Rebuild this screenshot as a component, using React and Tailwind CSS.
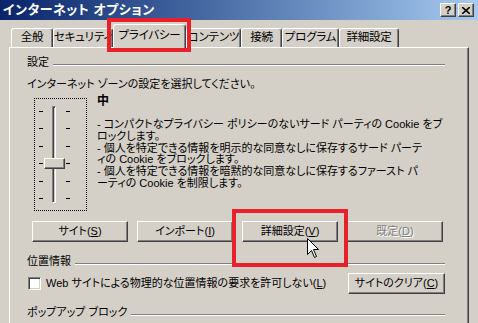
import React from 'react';

const raised =
  'border border-t-white border-l-white border-r-[#404040] border-b-[#404040] shadow-[inset_-1px_-1px_#808080] bg-[#d4d0c8]';

function Btn({ children, className = '', disabled }) {
  return (
    <div className={`h-[21px] flex items-center justify-center whitespace-nowrap ${raised} ${className}`}>
      <span className={disabled ? 'text-[#808080] [text-shadow:1px_1px_0_#fff]' : 'text-black'}>{children}</span>
    </div>
  );
}

function GroupLabel({ label, className = '' }) {
  return (
    <div className={`flex items-start h-[14px] ${className}`}>
      <span className="leading-[14px] pr-[4px] whitespace-nowrap">{label}</span>
      <div className="flex-1 mt-[9px] h-[2px] border-t border-t-[#808080] border-b border-b-white" />
    </div>
  );
}

function Tab({ label, width, selected }) {
  if (selected) {
    return (
      <div
        className={`relative z-10 -mb-[1px] h-[24px] flex items-center justify-center whitespace-nowrap bg-[#d4d0c8] border-t border-l border-t-white border-l-white border-r border-r-[#404040] shadow-[inset_-1px_0_#808080] rounded-t-[3px] ${width}`}
      >
        <span className="-mt-[2px]">{label}</span>
      </div>
    );
  }
  return (
    <div
      className={`h-[19px] flex items-center justify-center whitespace-nowrap border-t border-l border-t-white border-l-white border-r border-r-[#404040] shadow-[inset_-1px_0_#808080] rounded-t-[3px] ${width}`}
    >
      {label}
    </div>
  );
}

function Slider() {
  return (
    <div className="relative w-[53px] h-[113px] border border-dotted border-black flex pl-[4px]">
      <div className="mt-[12px] h-[88px] w-[4px] flex flex-col justify-between">
        {[0, 1, 2, 3, 4, 5].map((i) => (
          <div key={i} className="h-[1px] w-[4px] bg-black" />
        ))}
      </div>
      <div className="ml-[9px] mt-[7px] h-[97px] w-[4px] border border-t-[#808080] border-l-[#808080] border-r-white border-b-white shadow-[inset_1px_1px_#404040]" />
      <div className="ml-[10px] mt-[12px] h-[88px] w-[4px] flex flex-col justify-between">
        {[0, 1, 2, 3, 4, 5].map((i) => (
          <div key={i} className="h-[1px] w-[4px] bg-black" />
        ))}
      </div>
      {/* thumb */}
      <div className={`absolute left-[9px] top-[59px] w-[21px] h-[11px] ${raised}`} />
    </div>
  );
}

export default function App() {
  return (
    <div className="relative w-[478px] h-[323px] overflow-hidden bg-[#d4d0c8] text-[11px] text-black font-['Liberation_Sans','Noto_Sans_CJK_JP',sans-serif] [font-feature-settings:'palt']">
      {/* Title bar */}
      <div className="h-[20px] flex items-start bg-gradient-to-r from-[#0a246a] to-[#a6caf0]">
        <div className="pl-[3px] h-[20px] flex items-center text-white font-bold text-[13px] tracking-[0.5px]">
          インターネット オプション
        </div>
        <div className="ml-auto mt-[3px] mr-[4px] flex gap-[2px]">
          <div className={`w-[16px] h-[14px] flex items-center justify-center text-[11px] font-bold leading-none ${raised}`}>?</div>
          <div className={`w-[16px] h-[14px] flex items-center justify-center ${raised}`}>
            <svg width="8" height="7" viewBox="0 0 8 7">
              <path d="M0 0 L8 7 M8 0 L0 7" stroke="black" strokeWidth="1.6" />
            </svg>
          </div>
        </div>
      </div>

      {/* Tabs */}
      <div className="h-[27px] flex items-end pl-[11px] text-[11.5px] tracking-[-0.2px]">
        <Tab label="全般" width="w-[42px]" />
        <Tab label="セキュリティ" width="w-[60px]" />
        <Tab label="プライバシー" width="w-[73px]" selected />
        <Tab label="コンテンツ" width="w-[55px]" />
        <Tab label="接続" width="w-[41px]" />
        <Tab label="プログラム" width="w-[57px]" />
        <Tab label="詳細設定" width="w-[60px]" />
      </div>

      {/* Panel */}
      <div className="ml-[9px] w-[460px] h-[300px] border-t border-l border-t-white border-l-white border-r border-r-[#404040] shadow-[inset_-1px_0_#808080] pt-[7px] pl-[17px] pr-[23px]">
        <GroupLabel label="設定" />
        <div className="mt-[8px] leading-[14px] whitespace-nowrap">インターネット ゾーンの設定を選択してください。</div>

        <div className="mt-[3px] flex items-start">
          <div className="mt-[4px] ml-[7px]">
            <Slider />
          </div>
          <div className="ml-[10px] whitespace-nowrap">
            <div className="font-bold leading-[14px] text-[12px]">中</div>
            <div className="mt-[11px] leading-[11.8px]">
              <div>- コンパクトなプライバシー ポリシーのないサード パーティの Cookie をブ</div>
              <div>ロックします。</div>
              <div>- 個人を特定できる情報を明示的な同意なしに保存するサード パーテ</div>
              <div>ィの Cookie をブロックします。</div>
              <div>- 個人を特定できる情報を暗黙的な同意なしに保存するファースト パ</div>
              <div>ーティの Cookie を制限します。</div>
            </div>
          </div>
        </div>

        <div className="mt-[10px] pl-[5px] flex gap-[9px]">
          <Btn className="w-[96px]">サイト(<u>S</u>)</Btn>
          <Btn className="w-[96px]">インポート(<u>I</u>)</Btn>
          <Btn className="w-[96px]">詳細設定(<u>V</u>)</Btn>
          <Btn className="w-[96px]" disabled>既定(<u>D</u>)</Btn>
        </div>

        <GroupLabel label="位置情報" className="mt-[12px]" />

        <div className="mt-[5px] h-[21px] flex items-center">
          <div className="ml-[1px] w-[13px] h-[13px] bg-white border border-t-[#808080] border-l-[#808080] border-r-white border-b-white shadow-[inset_1px_1px_#404040,inset_-1px_-1px_#d4d0c8]" />
          <span className="ml-[5px] whitespace-nowrap">Web サイトによる物理的な位置情報の要求を許可しない(<u>L</u>)</span>
          <Btn className="ml-auto w-[97px]">サイトのクリア(<u>C</u>)</Btn>
        </div>

        <GroupLabel label="ポップアップ ブロック" className="mt-[11px]" />
      </div>

      {/* red annotation boxes */}
      <div className="absolute left-[107px] top-[18px] w-[84px] h-[34px] border-[4px] border-[#e8202a] z-20" />
      <div className="absolute left-[232px] top-[209px] w-[116px] h-[58px] border-[4px] border-[#e8202a] z-20" />

      {/* mouse cursor */}
      <svg className="absolute left-[307px] top-[238px] z-30" width="13" height="21" viewBox="0 0 13 21">
        <path d="M0.5 0.5 L0.5 16.5 L4.5 12.5 L7.5 19.5 L9.5 18.5 L6.5 11.5 L11.5 11.5 Z" fill="white" stroke="black" strokeWidth="1" />
      </svg>
    </div>
  );
}
